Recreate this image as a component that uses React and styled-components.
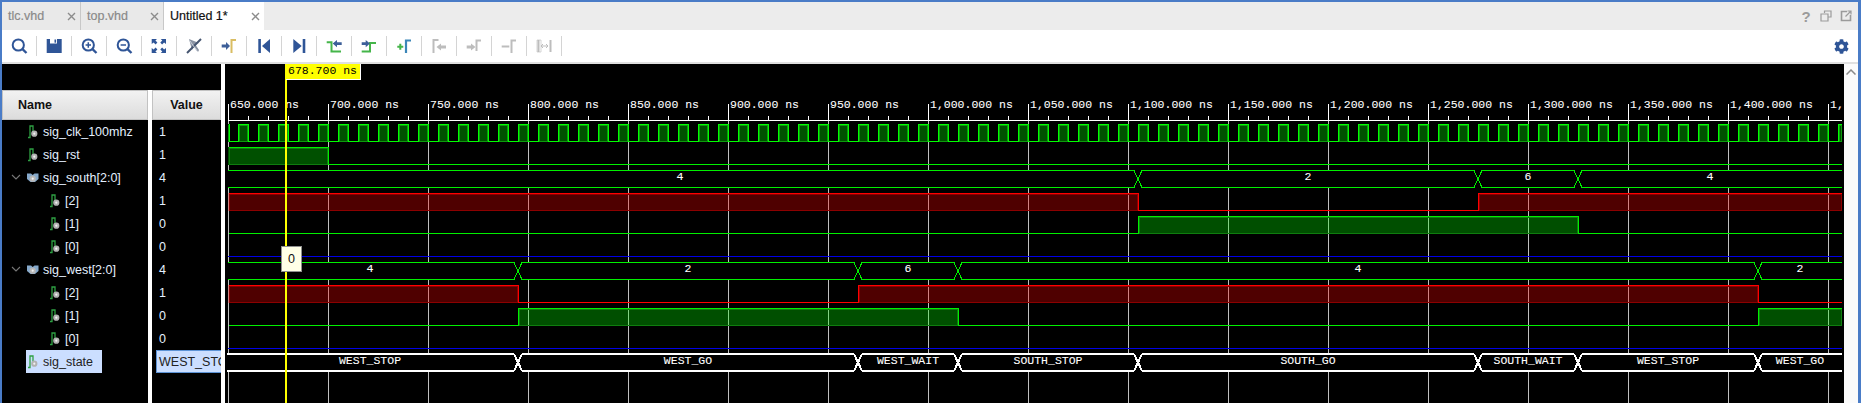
import React from "react";
import styled, { createGlobalStyle } from "styled-components";
import { FaCog } from "react-icons/fa";

const Global = createGlobalStyle`
  html, body { margin: 0; padding: 0; background: #fff; overflow: hidden; }
  * { box-sizing: border-box; }
`;

const SANS = `"Liberation Sans", Arial, sans-serif`;
const MONO = `"Liberation Mono", "Courier New", monospace`;
const NAVY = "#2f5597";

const Window = styled.div`
  width: 1861px;
  height: 403px;
  display: flex;
  flex-direction: column;
  border-top: 2px solid #4a7cc7;
  border-left: 2px solid #4a7cc7;
  border-right: 3px solid #4a7cc7;
  font-family: ${SANS};
  overflow: hidden;
`;
const TabBar = styled.div`
  height: 28px;
  flex: none;
  display: flex;
  align-items: stretch;
  background: #ececec;
`;
const Tab = styled.div`
  width: ${(p) => p.$w}px;
  display: flex;
  align-items: center;
  justify-content: space-between;
  padding: 0 4px 0 6px;
  font-size: 12.5px;
  color: ${(p) => (p.$active ? "#111" : "#8a8a8a")};
  background: ${(p) => (p.$active ? "#fff" : "#e9e9e9")};
  border-right: ${(p) => (p.$active ? "none" : "1px solid #c8c8c8")};
  -webkit-text-stroke: 0.2px currentColor;
`;
const CloseMark = styled.svg`
  width: 9px;
  height: 9px;
  flex: none;
  margin-top: 1px;
`;
const WinTools = styled.div`
  margin-left: auto;
  display: flex;
  align-items: center;
  gap: 6px;
  padding-right: 5px;
`;
const WinTool = styled.span`
  width: 14px;
  height: 14px;
  display: flex;
  align-items: center;
  justify-content: center;
  color: #9b9b9b;
  font-size: 15px;
  font-weight: bold;
`;
const Toolbar = styled.div`
  height: 34px;
  flex: none;
  display: flex;
  align-items: center;
  background: #fff;
  border-bottom: 2px solid #e0e0e0;
`;
const ToolCell = styled.div`
  width: 35px;
  height: 20px;
  flex: none;
  display: flex;
  align-items: center;
  justify-content: flex-start;
  padding-left: 7px;
  border-right: 1px solid #d4d4d4;
`;
const GearCell = styled.div`
  margin-left: auto;
  padding-right: 9px;
  display: flex;
  align-items: center;
  color: ${NAVY};
  font-size: 15px;
`;
const Main = styled.div`
  flex: 1;
  min-height: 0;
  display: flex;
  background: #fff;
`;
const SidePanel = styled.div`
  width: 219px;
  flex: none;
  display: flex;
  flex-direction: column;
  background: #000;
`;
const TopStrip = styled.div`
  height: 26px;
  flex: none;
`;
const Columns = styled.div`
  flex: 1;
  display: flex;
  gap: 4px;
  background: #fff;
`;
const Column = styled.div`
  width: ${(p) => p.$w}px;
  flex: none;
  background: #000;
  overflow: hidden;
`;
const Header = styled.div`
  height: 30px;
  display: flex;
  align-items: center;
  justify-content: ${(p) => (p.$center ? "center" : "flex-start")};
  padding-left: ${(p) => (p.$center ? 0 : 15)}px;
  font-size: 12.5px;
  font-weight: bold;
  color: #111;
  border: 1px solid #c2c2c2;
  background: linear-gradient(#f2f2f2, #dcdcdc);
`;
const NameRow = styled.div`
  height: 23px;
  display: flex;
  align-items: center;
  position: relative;
  padding-left: ${(p) => (p.$child ? 46 : 24)}px;
`;
const Chevron = styled.svg`
  position: absolute;
  left: 9px;
  top: 6px;
  width: 10px;
  height: 10px;
`;
const NameLabel = styled.div`
  display: flex;
  align-items: center;
  height: 23px;
  width: ${(p) => (p.$sel ? "76px" : "auto")};
  font-size: 12.5px;
  color: ${(p) => (p.$sel ? "#222" : "#e4f0ff")};
  background: ${(p) => (p.$sel ? "#cbdeff" : "transparent")};
  white-space: nowrap;
`;
const SigIcon = styled.svg`
  width: 15px;
  height: 16px;
  flex: none;
  margin-right: 2px;
`;
const ValueRow = styled.div`
  height: 23px;
  display: flex;
  align-items: center;
  margin-left: ${(p) => (p.$sel ? 4 : 0)}px;
  padding-left: ${(p) => (p.$sel ? 2 : 7)}px;
  font-size: 12.5px;
  white-space: nowrap;
  overflow: hidden;
  color: ${(p) => (p.$sel ? "#222" : "#e4f0ff")};
  background: ${(p) => (p.$sel ? "#cbdeff" : "transparent")};
  border: ${(p) => (p.$sel ? "1px solid #5d93d6" : "none")};
  border-right: none;
`;
const WaveArea = styled.div`
  width: 1619px;
  flex: none;
  margin-left: 4px;
  position: relative;
  background: #000;
  overflow: hidden;
`;
const WaveSvg = styled.svg`
  display: block;
  shape-rendering: crispEdges;
  font-family: ${MONO};
  font-size: 11.5px;
  text {
    stroke: #fff;
    stroke-width: 0.08px;
    shape-rendering: geometricPrecision;
  }
`;
const Scrollbar = styled.div`
  flex: 1;
  background: #fbfbfb;
  display: flex;
  justify-content: center;
  padding-top: 5px;
`;
const CursorTag = styled.div`
  position: absolute;
  left: 61px;
  top: 0;
  width: 75px;
  height: 16px;
  padding-left: 2px;
  background: #ffff00;
  border-right: 1px solid #fff;
  border-bottom: 1px solid #fff;
  color: #000;
  font-family: ${MONO};
  font-size: 11.5px;
  line-height: 14px;
  white-space: nowrap;
`;
const ValueTip = styled.div`
  position: absolute;
  left: 56px;
  top: 182px;
  width: 21px;
  height: 26px;
  display: flex;
  align-items: center;
  justify-content: center;
  background: #ffffe6;
  border: 1px solid #8f8f8f;
  color: #111;
  font-family: ${SANS};
  font-size: 12.5px;
`;

/* ---------- icons ---------- */
const Ico = ({ children }) => (
  <svg width="20" height="20" viewBox="0 0 20 20" fill="none">{children}</svg>
);
const Lens = ({ inner }) => (
  <>
    <circle cx="9.3" cy="9" r="5.6" stroke={NAVY} strokeWidth="2" />
    <path d="M13.5 13.2 L17.5 17" stroke={NAVY} strokeWidth="2.4" />
    {inner === "+" && <path d="M6.6 9H12M9.3 6.3V11.7" stroke={NAVY} strokeWidth="1.5" />}
    {inner === "-" && <path d="M6.6 9H12" stroke={NAVY} strokeWidth="1.5" />}
  </>
);
const S = "#bdbdbd";
const tools = [
  <Lens />,
  <>
    <path d="M2.7 3H17.7V17H2.7Z" fill={NAVY} />
    <rect x="6" y="3" width="7" height="4.5" fill="#fff" />
    <rect x="10.5" y="3.5" width="1.6" height="3.2" fill={NAVY} />
  </>,
  <Lens inner="+" />,
  <Lens inner="-" />,
  <>
    <path d="M2.7 3H8L6.4 4.6 8.4 6.6 6.6 8.4 4.6 6.4 2.7 8Z" fill={NAVY} />
    <path d="M17 3H11.7L13.3 4.6 11.3 6.6 13.1 8.4 15.1 6.4 17 8Z" fill={NAVY} />
    <path d="M2.7 17H8L6.4 15.4 8.4 13.4 6.6 11.6 4.6 13.6 2.7 12Z" fill={NAVY} />
    <path d="M17 17H11.7L13.3 15.4 11.3 13.4 13.1 11.6 15.1 13.6 17 12Z" fill={NAVY} />
  </>,
  <>
    <path d="M5 3L8 14 10 10 14 16 15 14 11 8 15 7Z" fill="#8a93a3" />
    <path d="M3 17L17 3" stroke="#44546f" strokeWidth="2" />
    <path d="M6 5L13 15" stroke="#c9d0da" strokeWidth="1" />
  </>,
  <>
    <path d="M2.7 8.5H7V6L11 10 7 14V11.5H2.7Z" fill="#3d5f99" />
    <path d="M12.5 17V4H17" stroke="#d9bd63" strokeWidth="2" />
  </>,
  <>
    <rect x="4.3" y="3" width="2.6" height="14" fill={NAVY} />
    <path d="M16 3V17L8 10Z" fill={NAVY} />
  </>,
  <>
    <path d="M4.3 3V17L12.7 10Z" fill={NAVY} />
    <rect x="13.7" y="3" width="2.6" height="14" fill={NAVY} />
  </>,
  <>
    <path d="M2.7 6.2H7.5V15.6H17" stroke="#45b54a" strokeWidth="2" />
    <path d="M8.7 7.6L13 4V6.2H17.7V9H13V11.2Z" fill="#3d5f99" />
  </>,
  <>
    <path d="M2.7 15.6H11V7H17" stroke="#45b54a" strokeWidth="2" />
    <path d="M11 7.6L6.7 4V6.2H2.7V9H6.7V11.2Z" fill="#3d5f99" />
  </>,
  <>
    <path d="M3.3 10.7H9.3M6.3 7.7V13.7" stroke="#45b54a" strokeWidth="2" />
    <path d="M12 17V4.5H17" stroke="#3b86b8" strokeWidth="2.2" />
  </>,
  <>
    <path d="M4.5 17V4H9.5" stroke={S} strokeWidth="2" />
    <path d="M7.5 11L12 7.5V9.5H17V12.5H12V14.5Z" fill={S} />
  </>,
  <>
    <path d="M2.7 9.5H7V7.5L11.5 11 7 14.5V12.5H2.7Z" fill={S} />
    <path d="M12.5 15V4.5H17" stroke={S} strokeWidth="2" />
  </>,
  <>
    <path d="M2.7 10.5H10.3" stroke={S} strokeWidth="2" />
    <path d="M12.5 17V4.5H17" stroke={S} strokeWidth="2" />
  </>,
  <>
    <path d="M4.5 4V16M16.5 4V16" stroke={S} strokeWidth="2" />
    <path d="M3 4H7V16H3Z" stroke={S} strokeWidth="1" opacity=".6" />
    <path d="M7 10H14M7 10L9 8M7 10L9 12M14 10L12 8M14 10L12 12" stroke={S} strokeWidth="1" />
  </>,
];

const BitIcon = () => (
  <SigIcon viewBox="0 0 15 16" fill="none">
    <path d="M2 13.5H4V2H7V8" stroke="#2ea043" strokeWidth="1.3" />
    <circle cx="8.3" cy="9.7" r="3.1" fill="#b2b2b2" />
    <circle cx="8.3" cy="9.7" r="1.1" fill="#f2f2f2" />
  </SigIcon>
);
const BusIcon = () => (
  <SigIcon viewBox="0 0 15 16" fill="none">
    <path d="M1 3.5H5L6.7 5 8.5 3.5H12.5V9L9 12H4.5L1 9Z" fill="#86a9cb" />
    <circle cx="6.7" cy="8.7" r="3.1" fill="#b8b8b8" />
    <circle cx="6.7" cy="8.7" r="1.1" fill="#f2f2f2" />
  </SigIcon>
);

/* ---------- table data ---------- */
const rows = [
  { name: "sig_clk_100mhz", value: "1" },
  { name: "sig_rst", value: "1" },
  { name: "sig_south[2:0]", value: "4", bus: true },
  { name: "[2]", value: "1", child: true },
  { name: "[1]", value: "0", child: true },
  { name: "[0]", value: "0", child: true },
  { name: "sig_west[2:0]", value: "4", bus: true },
  { name: "[2]", value: "1", child: true },
  { name: "[1]", value: "0", child: true },
  { name: "[0]", value: "0", child: true },
  { name: "sig_state", value: "WEST_STOP", sel: true },
];

/* ---------- waveform, in page coordinates ---------- */
const X0 = 228;
const XE = 1842;
const x = (t) => X0 + (t - 650) * 2;
const G = "#00f000";
const GB = "#00ff00";
const GD = "#0f7d0f";
const R = "#ff0000";
const RD = "#8c0000";
const BLUE = "#0000e6";

const majors = Array.from({ length: 17 }, (_, i) => 650 + i * 50);
const minors = Array.from({ length: 81 }, (_, i) => X0 + i * 20);
const fmt = (t) => {
  const s = String(t);
  return (s.length > 3 ? s.slice(0, -3) + "," + s.slice(-3) : s) + ".000 ns";
};

/* bit signal: edges = x positions where it toggles; first = starts high */
function Bit({ top, bottom, edges, first, bright, dim, fill, width = 1 }) {
  const pts = [X0, ...edges, XE];
  const fills = [];
  let d = "";
  let high = first;
  for (let i = 0; i < pts.length - 1; i++) {
    const y = (high ? top : bottom) + 0.5;
    d += `${i === 0 ? "M" : "L"}${pts[i] + 0.5} ${y}L${pts[i + 1] + 0.5} ${y}`;
    if (high) fills.push([pts[i], pts[i + 1]]);
    high = !high;
  }
  return (
    <g>
      {fills.map(([a, b], i) => (
        <g key={i}>
          <rect x={a} y={top} width={b - a} height={bottom - top + 1} fill={fill} />
          <path
            d={`M${a + 1.5} ${bottom + 0.5}V${top + 1.5}H${b - 0.5}V${bottom + 0.5}Z`}
            stroke={dim}
            fill="none"
          />
        </g>
      ))}
      <path d={d} stroke={bright} strokeWidth={width} fill="none" />
    </g>
  );
}

function Bus({ top, bottom, stops, labels, color, sw = 1, baseline }) {
  const w = 4;
  const tt = top + (sw === 2 ? 0 : 0.5);
  const bb = bottom + (sw === 2 ? 0 : 0.5);
  const pts = [X0 - (sw === 2 ? 1 : 0), ...stops, XE];
  const paths = [];
  const bg = [];
  for (let i = 0; i < pts.length - 1; i++) {
    const a = pts[i] + (i === 0 ? 0 : w);
    const b = pts[i + 1] - (i === pts.length - 2 ? 0 : w);
    paths.push(`M${a} ${tt}H${b}M${a} ${bb}H${b}`);
    bg.push(<rect key={i} x={pts[i]} y={top} width={pts[i + 1] - pts[i]} height={bottom - top} fill="#000" />);
  }
  stops.forEach((s) => {
    paths.push(`M${s - w} ${tt}L${s + w} ${bb}M${s - w} ${bb}L${s + w} ${tt}`);
  });
  return (
    <g>
      {bg}
      <path d={paths.join("")} stroke={color} strokeWidth={sw} fill="none" />
      {labels.map((l, i) => (
        <text
          key={i}
          x={((i === 0 ? 222 : pts[i]) + pts[i + 1]) / 2}
          y={baseline}
          fill="#fff"
          textAnchor="middle"
        >
          {l}
        </text>
      ))}
    </g>
  );
}

const clockEdges = [229];
for (let e = 238; e < XE; e += 10) clockEdges.push(e);

const T = { a: 1138, b: 1478, c: 1578 };
const W = { a: 518, b: 858, c: 958, d: 1758 };

function Wave() {
  return (
    <WaveSvg width="1619" height="339" viewBox="225 64 1619 339">
      <defs>
        <clipPath id="waveClip">
          <rect x="225" y="64" width={XE - 225} height="339" />
        </clipPath>
      </defs>
      <g clipPath="url(#waveClip)">
        {majors.map((t) => (
          <rect key={t} x={x(t)} y="120" width="1" height="283" fill="#c0c0c0" />
        ))}
        {minors.map((m) => (
          <rect key={m} x={m} y="116" width="1" height="4" fill="#fff" />
        ))}
        {majors.map((t) => (
          <g key={t}>
            <rect x={x(t)} y="104" width="1" height="16" fill="#fff" />
            <text x={x(t) + 2} y="107.5" fill="#fff">{fmt(t)}</text>
          </g>
        ))}
        <rect x="228" y="120" width={XE - 228} height="1" fill="#fff" />

        <Bit top={124} bottom={141} edges={clockEdges} first={true} bright={GB} dim="#0d9a0d" fill="#005000" />
        <Bit top={147} bottom={164} edges={[328]} first={true} bright={G} dim={GD} fill="#005000" />

        <Bus top={170} bottom={187} stops={[T.a, T.b, T.c]} labels={["4", "2", "6", "4"]} color={G} baseline={180} />
        <Bit top={193} bottom={210} edges={[T.a, T.b]} first={true} bright={R} dim={RD} fill="rgba(255,0,0,.31)" />
        <Bit top={216} bottom={233} edges={[T.a, T.c]} first={false} bright={G} dim={GD} fill="rgba(0,255,0,.31)" />
        <rect x="228" y="256" width={XE - 228} height="1" fill={BLUE} />

        <Bus top={262} bottom={279} stops={[W.a, W.b, W.c, W.d]} labels={["4", "2", "6", "4", "2"]} color={G} baseline={272} />
        <Bit top={285} bottom={302} edges={[W.a, W.b, W.d]} first={true} bright={R} dim={RD} fill="rgba(255,0,0,.31)" />
        <Bit top={308} bottom={325} edges={[W.a, W.c, W.d]} first={false} bright={G} dim={GD} fill="rgba(0,255,0,.31)" />
        <rect x="228" y="348" width={XE - 228} height="1" fill={BLUE} />

        <Bus
          top={354}
          bottom={371}
          stops={[W.a, W.b, W.c, T.a, T.b, T.c, W.d]}
          labels={["WEST_STOP", "WEST_GO", "WEST_WAIT", "SOUTH_STOP", "SOUTH_GO", "SOUTH_WAIT", "WEST_STOP", "WEST_GO"]}
          color="#fff"
          sw={2}
          baseline={364}
        />
      </g>
      <rect x="285" y="64" width="2" height="339" fill="#ffff00" />
    </WaveSvg>
  );
}

export default function App() {
  return (
    <>
      <Global />
      <Window>
        <TabBar>
          {[
            ["tlc.vhd", 79],
            ["top.vhd", 83],
            ["Untitled 1*", 100, true],
          ].map(([label, w, active]) => (
            <Tab key={label} $w={w} $active={active}>
              {label}
              <CloseMark viewBox="0 0 9 9">
                <path d="M1 1L8 8M8 1L1 8" stroke="#8c8c8c" strokeWidth="1.4" />
              </CloseMark>
            </Tab>
          ))}
          <WinTools>
            <WinTool>?</WinTool>
            <WinTool>
              <svg width="12" height="12" viewBox="0 0 12 12" fill="none">
                <path d="M4.5 3V1H11V7H8.5M1 4H8V11H1Z" stroke="#9b9b9b" strokeWidth="1.2" />
              </svg>
            </WinTool>
            <WinTool>
              <svg width="12" height="12" viewBox="0 0 12 12" fill="none">
                <path d="M7 1.5H1.5V10.5H10.5V5" stroke="#9b9b9b" strokeWidth="1.6" />
                <path d="M5.5 6.5L11 1M7.5 1H11V4.5" stroke="#9b9b9b" strokeWidth="1.2" />
              </svg>
            </WinTool>
          </WinTools>
        </TabBar>
        <Toolbar>
          {tools.map((t, i) => (
            <ToolCell key={i}><Ico>{t}</Ico></ToolCell>
          ))}
          <GearCell><FaCog /></GearCell>
        </Toolbar>
        <Main>
          <SidePanel>
            <TopStrip />
            <Columns>
              <Column $w={146}>
                <Header>Name</Header>
                {rows.map((r, i) => (
                  <NameRow key={i} $child={r.child}>
                    {r.bus && (
                      <Chevron viewBox="0 0 10 10" fill="none">
                        <path d="M1 3L5 7 9 3" stroke="#777" strokeWidth="1.1" />
                      </Chevron>
                    )}
                    <NameLabel $sel={r.sel}>
                      {r.bus ? <BusIcon /> : <BitIcon />}
                      {r.name}
                    </NameLabel>
                  </NameRow>
                ))}
              </Column>
              <Column $w={69}>
                <Header $center>Value</Header>
                {rows.map((r, i) => (
                  <ValueRow key={i} $sel={r.sel}>{r.value}</ValueRow>
                ))}
              </Column>
            </Columns>
          </SidePanel>
          <WaveArea>
            <Wave />
            <CursorTag>678.700 ns</CursorTag>
            <ValueTip>0</ValueTip>
          </WaveArea>
          <Scrollbar>
            <svg width="10" height="6" viewBox="0 0 10 6" fill="none">
              <path d="M0.5 5.5L5 1 9.5 5.5" stroke="#8a8a8a" strokeWidth="1.5" />
            </svg>
          </Scrollbar>
        </Main>
      </Window>
    </>
  );
}
